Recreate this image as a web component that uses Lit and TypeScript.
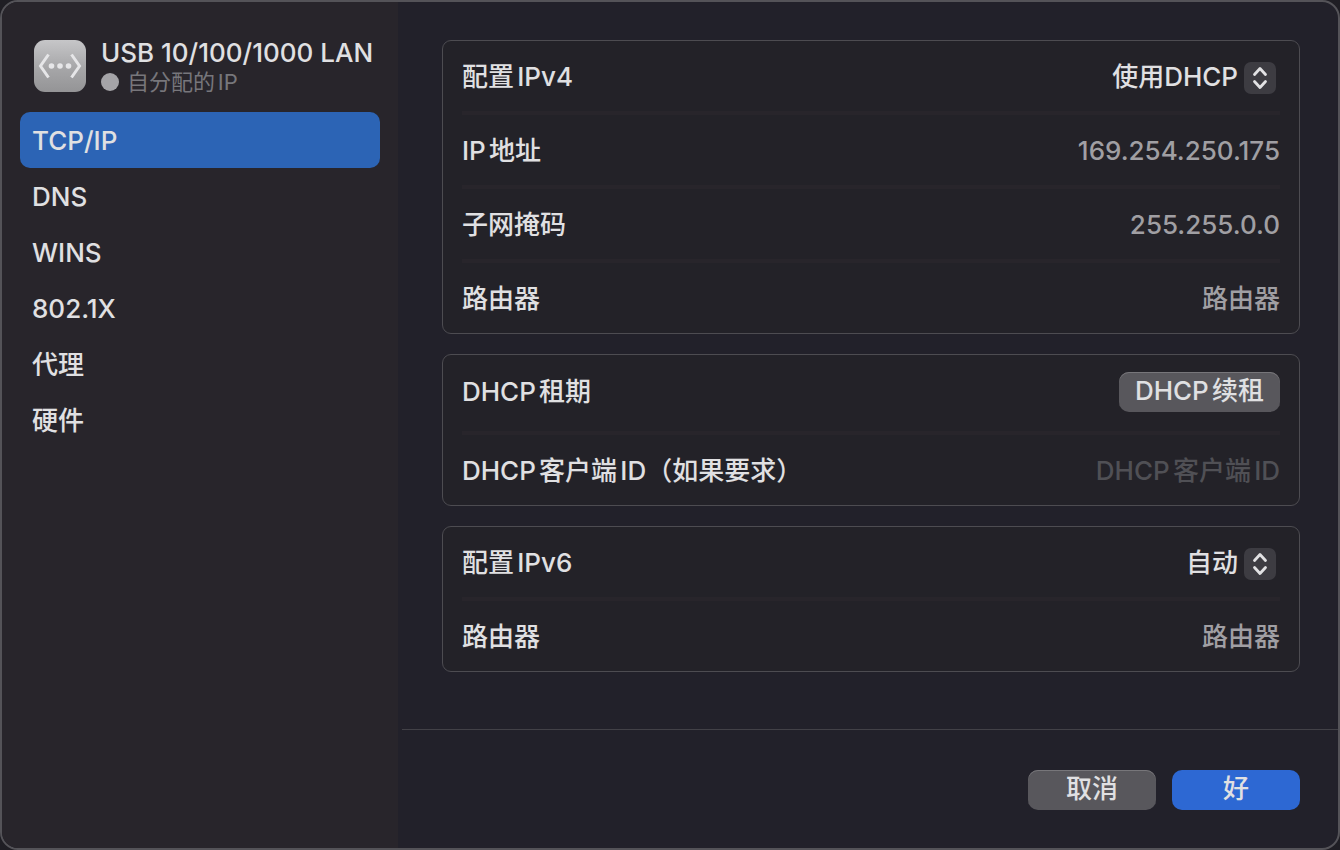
import { LitElement, html, css, svg, nothing } from "lit";
import { customElement, property, state } from "lit/decorators.js";
import { classMap } from "lit/directives/class-map.js";

const SECTIONS = ["TCP/IP", "DNS", "WINS", "802.1X", "代理", "硬件"];

@customElement("popup-select")
class PopupSelect extends LitElement {
  @property() label = "";
  @property({ attribute: false }) options: string[] = [];

  static styles = css`
    :host {
      display: flex;
      flex: 1;
    }
    .row {
      display: flex;
      flex: 1;
      align-items: center;
      justify-content: space-between;
    }
    .popup {
      display: grid;
      align-items: center;
      padding-right: 4px;
    }
    .select,
    .select option {
      text-autospace: normal;
    }
    .select {
      grid-area: 1 / 1;
      appearance: none;
      field-sizing: content;
      font: inherit;
      color: inherit;
      background: none;
      border: 0;
      margin: 0;
      padding: 0 38px 0 0;
      outline: none;
    }
    .chevrons {
      grid-area: 1 / 1;
      justify-self: end;
      width: 32px;
      height: 32px;
      margin-top: 2px;
      pointer-events: none;
    }
  `;

  render() {
    return html`
      <div class="row">
        <label for="choice">${this.label}</label>
        <span class="popup">
          <select id="choice" class="select">
            ${this.options.map((o) => html`<option>${o}</option>`)}
          </select>
          <svg class="chevrons" viewBox="0 0 32 32" aria-hidden="true">
            <rect width="32" height="32" rx="7" fill="#3d3c42" />
            <path
              d="M10.500 12.500L16 6.500L21.500 12.500M10.500 19.500L16 25.500L21.500 19.500"
              fill="none"
              stroke="#e2e2e4"
              stroke-width="2.800"
              stroke-linecap="round"
              stroke-linejoin="round"
            />
          </svg>
        </span>
      </div>
    `;
  }
}

@customElement("app-root")
class AppRoot extends LitElement {
  @state() private current = SECTIONS[0];

  static styles = css`
    :host {
      display: block;
      background: #1f1e24;
      font-family: Inter, "Noto Sans CJK SC", sans-serif;
      font-size: 26px;
      font-weight: 500;
      line-height: 32px;
      color: #e0e0e2;
      text-autospace: normal;
    }
    .window {
      box-sizing: border-box;
      min-height: 100vh;
      display: grid;
      grid-template-columns: 396px 1fr;
      border: 2px solid #545358;
      border-radius: 18px;
      overflow: hidden;
      background: #22212a;
    }
    .sidebar {
      background: #28252b;
      padding: 36px 18px;
    }
    .device {
      display: flex;
      align-items: flex-start;
      gap: 15px;
      padding: 0 0 16px 14px;
    }
    .device-icon {
      flex: none;
      width: 52px;
      height: 52px;
      margin-top: 2px;
    }
    .device-name {
      margin: 0;
      font-size: 26px;
      font-weight: 500;
      line-height: 30px;
      white-space: nowrap;
    }
    .status {
      display: flex;
      align-items: center;
      gap: 8px;
      margin: 0;
      font-size: 22px;
      font-weight: 400;
      line-height: 28px;
      color: #77767b;
    }
    .dot {
      width: 18px;
      height: 18px;
      border-radius: 50%;
      background: #a5a4a8;
    }
    .nav {
      display: flex;
      flex-direction: column;
    }
    .nav-item {
      padding: 13px 12px 11px;
      border-radius: 10px;
      color: inherit;
      text-decoration: none;
    }
    .selected {
      background: #2c64b5;
    }
    .main {
      display: flex;
      flex-direction: column;
      min-width: 0;
    }
    .content {
      flex: 1;
      display: flex;
      flex-direction: column;
      gap: 20px;
      padding: 38px 38px 38px 44px;
    }
    .group {
      border: 1px solid #4d4c51;
      border-radius: 9px;
      background: #232228;
      padding: 0 19px;
    }
    .row {
      display: flex;
      align-items: center;
      justify-content: space-between;
      min-height: 68px;
      padding-top: 2px;
    }
    .row + .row {
      border-top: 4px solid #28252b;
    }
    .tall {
      min-height: 74px;
      padding: 0 0 2px;
    }
    .value {
      color: #a09fa3;
    }
    .field {
      flex: 1;
      min-width: 0;
      font: inherit;
      text-align: right;
      color: #e0e0e2;
      background: none;
      border: 0;
      padding: 0;
      outline: none;
    }
    .field::placeholder {
      color: #505055;
      opacity: 1;
    }
    .button {
      font: inherit;
      line-height: 32px;
      color: #e0e0e2;
      background: #58575c;
      border: 0;
      border-radius: 10px;
      padding: 3px 16px 5px;
      box-shadow: inset 0 1px 0 #77767a;
    }
    .footer {
      display: flex;
      justify-content: flex-end;
      gap: 16px;
      margin-left: 4px;
      padding: 40px 38px 38px;
      border-top: 1px solid #424147;
    }
    .wide {
      min-width: 128px;
    }
    .primary {
      background: #2d68d3;
      box-shadow: none;
    }
  `;

  private select(event: Event, name: string) {
    event.preventDefault();
    this.current = name;
  }

  private info(label: string, value: string) {
    return html`<div class="row"><span>${label}</span><span class="value">${value}</span></div>`;
  }

  private deviceIcon() {
    return html`
      <svg class="device-icon" viewBox="0 0 52 52" aria-hidden="true">
        <defs>
          <linearGradient id="metal" x1="0" y1="0" x2="0" y2="1">
            <stop offset="0" stop-color="#c6c6c8" />
            <stop offset="0.550" stop-color="#a6a6a8" />
            <stop offset="1" stop-color="#949496" />
          </linearGradient>
        </defs>
        <rect width="52" height="52" rx="11" fill="url(#metal)" />
        <path
          d="M14.500 14.500L6.500 26L14.500 37.500M37.500 14.500L45.500 26L37.500 37.500"
          fill="none"
          stroke="#e6e6e8"
          stroke-width="3"
        />
        ${[17.5, 26, 34.5].map((x) => svg`<circle cx=${x} cy="26" r="2.800" fill="#e6e6e8" />`)}
      </svg>
    `;
  }

  render() {
    return html`
      <div class="window">
        <aside class="sidebar">
          <header class="device">
            ${this.deviceIcon()}
            <div>
              <h1 class="device-name">USB 10/100/1000 LAN</h1>
              <p class="status"><span class="dot"></span>自分配的IP</p>
            </div>
          </header>
          <nav class="nav">
            ${SECTIONS.map(
              (name) => html`<a
                href="#"
                class=${classMap({ "nav-item": true, selected: name === this.current })}
                aria-current=${name === this.current ? "page" : nothing}
                @click=${(e: Event) => this.select(e, name)}
                >${name}</a
              >`
            )}
          </nav>
        </aside>
        <main class="main">
          <div class="content">
            <section class="group">
              <div class="row">
                <popup-select label="配置IPv4" .options=${["使用DHCP"]}></popup-select>
              </div>
              ${this.info("IP地址", "169.254.250.175")}
              ${this.info("子网掩码", "255.255.0.0")}
              ${this.info("路由器", "路由器")}
            </section>
            <section class="group">
              <div class="row tall">
                <span>DHCP租期</span>
                <button class="button" type="button">DHCP续租</button>
              </div>
              <div class="row">
                <label for="client-id">DHCP客户端ID（如果要求）</label>
                <input id="client-id" class="field" type="text" placeholder="DHCP客户端ID" />
              </div>
            </section>
            <section class="group">
              <div class="row">
                <popup-select label="配置IPv6" .options=${["自动"]}></popup-select>
              </div>
              ${this.info("路由器", "路由器")}
            </section>
          </div>
          <footer class="footer">
            <button class="button wide" type="button">取消</button>
            <button class="button wide primary" type="button">好</button>
          </footer>
        </main>
      </div>
    `;
  }
}
